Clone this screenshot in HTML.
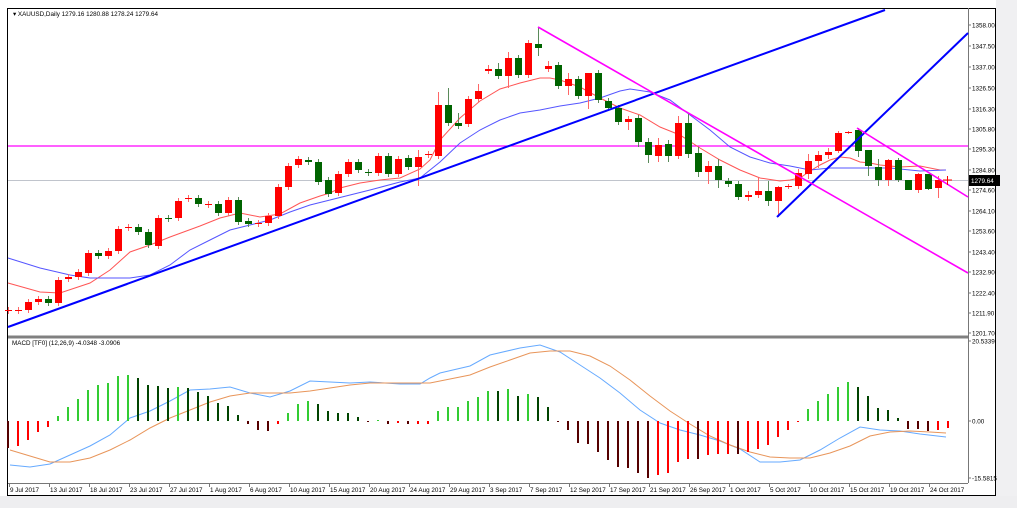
<!DOCTYPE html>
<html><head><meta charset="utf-8"><style>
html,body{margin:0;padding:0;background:#fff;width:1017px;height:508px;overflow:hidden}
svg{display:block}
text{font-family:"Liberation Sans",sans-serif;font-size:6.3px;fill:#000}
</style></head><body>
<svg id="s" width="1017" height="508" viewBox="0 0 1017 508" xmlns="http://www.w3.org/2000/svg">
<rect x="0" y="0" width="1017" height="508" fill="#fff"/>
<rect x="996" y="0" width="21" height="508" fill="#f0f0f2"/>
<rect x="0" y="496" width="1017" height="12" fill="#eeeef0"/>
<rect x="7.5" y="8.5" width="988" height="487" fill="#fff" stroke="#000" stroke-width="1"/>
<line x1="968.5" y1="8" x2="968.5" y2="483" stroke="#777"/>
<line x1="8" y1="337" x2="968" y2="337" stroke="#808080" stroke-width="3"/>
<line x1="8" y1="483.5" x2="968" y2="483.5" stroke="#777"/>
<line x1="8" y1="180.5" x2="968" y2="180.5" stroke="#c0c4cc"/>
<line x1="8" y1="146" x2="968" y2="146" stroke="#f0f" stroke-width="1.3"/>
<g id="ma" fill="none" stroke-width="1"></g>
<g id="cd"></g>
<g stroke-width="2" fill="none">
<line x1="8" y1="327" x2="885" y2="10" stroke="#00f"/>
<line x1="777" y1="217" x2="968" y2="33" stroke="#00f"/>
</g>
<g stroke-width="1.6" fill="none">
<line x1="538" y1="27" x2="968" y2="273" stroke="#f0f"/>
<line x1="857" y1="128" x2="968" y2="197" stroke="#f0f"/>
</g>
<path d="M943 180h9M947.5 176v9" stroke="#f00" stroke-width="1"/>
<text x="13" y="16">▾ XAUUSD,Daily  1279.16 1280.88 1278.24 1279.64</text>
<text x="12" y="345">MACD [TF0] (12,26,9) -4.0348 -3.0906</text>
<g id="ax"></g>
<rect x="969" y="175" width="31" height="11" fill="#000"/>
<text x="971" y="183" style="fill:#fff">1279.64</text>
<g id="dt"></g>
</svg>
<script>
var NS="http://www.w3.org/2000/svg";
function el(p,t,a,tx){var e=document.createElementNS(NS,t);for(var k in a)e.setAttribute(k,a[k]);if(tx)e.textContent=tx;document.getElementById(p).appendChild(e);return e;}
var C=[[8,'r',310,311],[18,'r',310,311],[28,'r',302,310],[38,'r',299,302],[48,'g',299,303],[58,'r',280,303],[68,'r',277,279],[78,'r',272,277],[88,'r',253,273],[98,'g',253,256],[108,'r',251,256],[118,'r',229,251],[128,'r',227,228],[138,'g',227,232],[148,'g',232,245],[158,'r',218,246],[168,'g',218,219],[178,'r',201,218],[188,'r',198,199],[198,'g',198,204],[208,'r',204,205],[218,'g',204,213],[228,'r',200,213],[238,'g',200,222],[248,'g',221,224],[258,'r',223,224],[268,'r',216,223],[278,'r',187,216],[288,'r',166,187],[298,'r',159,165],[308,'g',160,162],[318,'g',162,182],[328,'g',180,194],[338,'r',174,193],[348,'r',162,174],[358,'g',162,170],[368,'g',172,173],[378,'r',156,173],[388,'g',156,174],[398,'r',159,174],[408,'g',158,167],[418,'r',157,167,150,186],[428,'r',154,155],[438,'r',105,156,92],[448,'g',105,123,88],[458,'g',123,126,113],[468,'r',99,124],[478,'r',91,99,84],[488,'r',69,71,65],[498,'g',69,76,63],[508,'r',58,76,52,88],[518,'g',58,75],[528,'r',43,75],[538,'g',44,48,27,56],[548,'r',66,69,61],[558,'g',65,86],[568,'r',79,86,73,95],[578,'g',79,96],[588,'r',73,96,73,109],[598,'g',73,100],[608,'g',101,108],[618,'g',108,122],[628,'r',119,122,116,130],[638,'g',118,142,115,147],[648,'g',142,155,138,163],[658,'r',145,156,138,162],[668,'g',144,156,140,162],[678,'r',123,156,116,159],[688,'g',123,154,113,158],[698,'g',153,172,147,177],[708,'r',166,172,161,184],[718,'g',166,180,159,188],[728,'g',181,184],[738,'g',184,197,181,200],[748,'r',195,197,191,201],[758,'r',191,195,178,198],[768,'g',191,201,181,206],[778,'r',187,201,186,217],[788,'r',186,187,184,189],[798,'r',173,186,169,189],[808,'r',161,174,154,179],[818,'r',155,161,151,168],[828,'r',152,155,148,159],[838,'r',133,151,131,153],[848,'r',132,133,131,134],[858,'g',130,151,128,157],[868,'g',150,166,150,176],[878,'g',167,180,159,186],[888,'r',160,180,159,186],[898,'g',160,180,158,182],[908,'g',180,190,180,190],[918,'r',174,190,173,193],[928,'g',174,189,174,190],[938,'r',180,188,176,198]];
C.forEach(function(c){var col=c[1]=='r'?'#f00':'#006400',wc=c[1]=='r'?'#f66':'#5a8a5a';
var t=c[4]||c[2]-3,b=c[5]||c[3]+3;
el('cd','line',{x1:c[0]+.5,y1:t,x2:c[0]+.5,y2:b,stroke:wc,'stroke-width':1});
var h=Math.max(1,c[3]-c[2]);el('cd','rect',{x:c[0]-3,y:c[2],width:7,height:h,fill:col});});
function pl(pts,col,w){el('ma','polyline',{points:pts.map(function(p){return p.join(',')}).join(' '),stroke:col,'stroke-width':w||1,fill:'none'});}
pl([[8,283],[40,292],[60,293],[90,283],[110,270],[130,252],[150,245],[170,237],[200,226],[220,218],[240,213],[260,217],[280,214],[300,203],[320,196],[330,193],[340,188],[360,183],[380,180],[400,178],[420,169],[430,160],[440,140],[460,118],[480,101],[500,89],[520,83],[540,78],[550,78],[560,80],[580,87],[600,98],[620,108],[640,115],[660,127],[680,135],[700,148],[720,160],[740,170],[760,178],[780,181],[790,180],[800,178],[810,171],[820,165],[830,160],[840,157],[850,158],[860,162],[870,163],[880,165],[900,167],[920,166],[940,170],[946,170]],'#f55');
pl([[8,258],[40,268],[70,275],[90,278],[130,278],[150,275],[170,265],[190,250],[210,240],[230,230],[250,225],[270,220],[290,212],[310,205],[330,200],[350,195],[370,190],[400,182],[420,178],[440,162],[460,143],[480,130],[500,120],[520,113],[540,110],[560,106],[580,103],[600,98],[620,91],[630,89],[650,92],[670,100],[690,115],[710,130],[730,147],[750,157],[770,163],[790,166],[810,170],[830,168],[890,168],[920,171],[946,170]],'#55f');
var M=[[448,'d'],[446,'r'],[440,'r'],[432,'r'],[427,'r'],[416,'g'],[407,'g'],[399,'g'],[390,'g'],[385,'g'],[383,'g'],[376,'g'],[375,'g'],[378,'G'],[385,'G'],[386,'G'],[388,'G'],[387,'g'],[388,'G'],[392,'G'],[396,'G'],[403,'G'],[406,'G'],[415,'G'],[424,'d'],[430,'d'],[431,'d'],[424,'r'],[413,'g'],[404,'g'],[401,'g'],[404,'G'],[411,'G'],[413,'G'],[413,'G'],[417,'G'],[422,'d'],[420,'g'],[424,'d'],[423,'r'],[424,'d'],[424,'r'],[424,'r'],[411,'g'],[407,'g'],[407,'g'],[401,'g'],[397,'g'],[391,'g'],[391,'G'],[389,'g'],[396,'G'],[394,'g'],[397,'G'],[407,'G'],[422,'d'],[430,'d'],[443,'d'],[444,'d'],[452,'d'],[460,'d'],[467,'d'],[468,'d'],[473,'d'],[478,'d'],[475,'r'],[473,'r'],[462,'r'],[459,'r'],[459,'d'],[455,'r'],[454,'r'],[454,'r'],[454,'d'],[452,'r'],[449,'r'],[445,'r'],[437,'r'],[430,'r'],[422,'r'],[409,'g'],[401,'g'],[394,'g'],[387,'g'],[382,'g'],[387,'G'],[396,'G'],[408,'G'],[410,'G'],[418,'G'],[429,'d'],[429,'d'],[431,'d'],[430,'r'],[428,'r']];
var cm={d:'#500',r:'#f00',g:'#3c3',G:'#040'};
M.forEach(function(m,i){var x=8+10*i,y=m[0];el('cd','rect',{x:x-1,y:Math.min(y,421),width:2,height:Math.max(1,Math.abs(y-421)),fill:cm[m[1]]});});
pl([[10,465],[30,467],[50,464],[70,455],[90,446],[110,435],[130,418],[150,411],[170,401],[190,390],[210,389],[230,387],[250,393],[270,397],[290,391],[310,381],[330,382],[350,383],[370,382],[400,384],[420,384],[430,378],[440,373],[470,366],[490,355],[520,348],[540,345],[560,352],[580,365],[600,378],[620,393],[640,410],[660,423],[680,430],[700,435],[720,441],[740,449],[760,462],[780,462],[800,460],[820,450],[840,438],[860,427],[880,430],[900,431],[920,434],[946,437]],'#6af');
pl([[10,450],[30,456],[50,462],[70,462],[90,458],[110,450],[130,440],[150,428],[170,418],[190,410],[210,402],[230,396],[250,393],[290,393],[310,391],[330,388],[350,385],[370,383],[430,383],[450,379],[470,375],[490,367],[510,360],[530,353],[550,351],[570,351],[590,356],[610,366],[630,380],[650,396],[670,411],[690,424],[710,436],[730,445],[750,452],[770,457],[790,458],[810,458],[830,453],[850,446],[870,436],[890,432],[910,431],[930,432],[946,433]],'#e8955a');
var P=[[25,'1358.00'],[46,'1347.50'],[67,'1337.00'],[88,'1326.50'],[109,'1316.30'],[129,'1305.80'],[149,'1295.30'],[170,'1284.80'],[190,'1274.60'],[211,'1264.10'],[231,'1253.60'],[252,'1243.40'],[272,'1232.90'],[293,'1222.40'],[313,'1211.90'],[333,'1201.70'],[341,'20.5339'],[421,'0.00'],[478,'-15.5815']];
P.forEach(function(p){el('ax','line',{x1:968,y1:p[0],x2:971,y2:p[0],stroke:'#777'});el('ax','text',{x:972,y:p[0]+2.5},p[1]);});
var D=['9 Jul 2017','13 Jul 2017','18 Jul 2017','23 Jul 2017','27 Jul 2017','1 Aug 2017','6 Aug 2017','10 Aug 2017','15 Aug 2017','20 Aug 2017','24 Aug 2017','29 Aug 2017','3 Sep 2017','7 Sep 2017','12 Sep 2017','17 Sep 2017','21 Sep 2017','26 Sep 2017','1 Oct 2017','5 Oct 2017','10 Oct 2017','15 Oct 2017','19 Oct 2017','24 Oct 2017'];
D.forEach(function(d,i){var x=9+40*i;el('dt','line',{x1:x+.5,y1:483,x2:x+.5,y2:487,stroke:'#777'});el('dt','text',{x:x+1,y:492},d);});
</script>
</body></html>
